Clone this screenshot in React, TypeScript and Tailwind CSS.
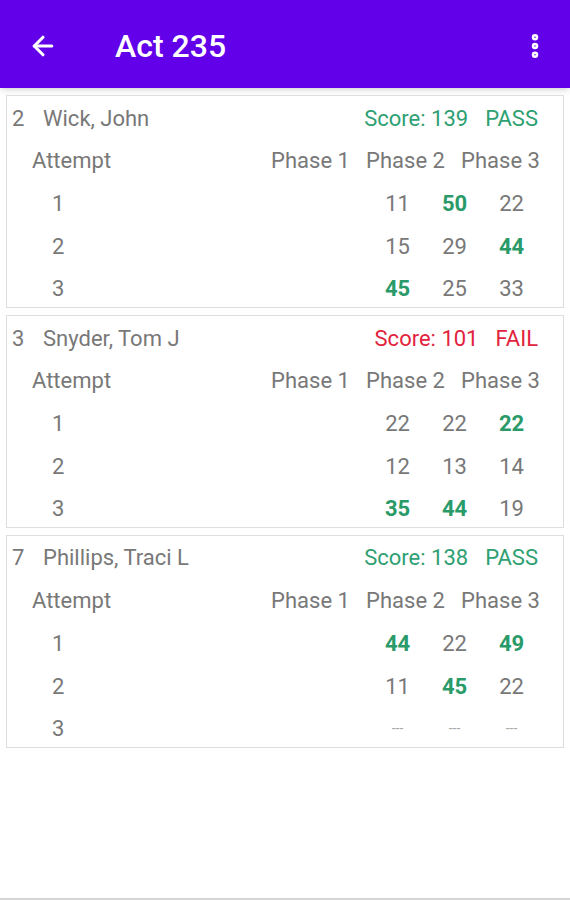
import { ArrowLeft, EllipsisVertical } from "lucide-react";

type Cell = { v: string; hi?: boolean };

type Entry = {
  no: number;
  name: string;
  score: number;
  pass: boolean;
  rows: Cell[][];
};

const entries: Entry[] = [
  {
    no: 2,
    name: "Wick, John",
    score: 139,
    pass: true,
    rows: [
      [{ v: "11" }, { v: "50", hi: true }, { v: "22" }],
      [{ v: "15" }, { v: "29" }, { v: "44", hi: true }],
      [{ v: "45", hi: true }, { v: "25" }, { v: "33" }],
    ],
  },
  {
    no: 3,
    name: "Snyder, Tom J",
    score: 101,
    pass: false,
    rows: [
      [{ v: "22" }, { v: "22" }, { v: "22", hi: true }],
      [{ v: "12" }, { v: "13" }, { v: "14" }],
      [{ v: "35", hi: true }, { v: "44", hi: true }, { v: "19" }],
    ],
  },
  {
    no: 7,
    name: "Phillips, Traci L",
    score: 138,
    pass: true,
    rows: [
      [{ v: "44", hi: true }, { v: "22" }, { v: "49", hi: true }],
      [{ v: "11" }, { v: "45", hi: true }, { v: "22" }],
      [{ v: "---" }, { v: "---" }, { v: "---" }],
    ],
  },
];

function ScoreCard({ e }: { e: Entry }) {
  const tone = e.pass ? "text-[#2ea072]" : "text-[#e2233d]";
  return (
    <div className="border border-[#dedede] bg-white">
      {/* name + score */}
      <div className="flex h-[42.2px] items-center pl-[5px] pr-[25px] pt-[2px]">
        <span className="w-[31px]">{e.no}</span>
        <span className="flex-1">{e.name}</span>
        <span className={tone}>Score: {e.score}</span>
        <span className={`ml-[17px] ${tone}`}>{e.pass ? "PASS" : "FAIL"}</span>
      </div>

      {/* column titles */}
      <div className="flex h-[42.2px] items-center pr-[15px] pt-[3px]">
        <span className="flex-1 pl-[25px]">Attempt</span>
        <span className="w-[95px] text-center">Phase 1</span>
        <span className="w-[95px] text-center">Phase 2</span>
        <span className="w-[95px] text-center">Phase 3</span>
      </div>

      {e.rows.map((r, i) => (
        <div key={i} className="flex h-[42.2px] items-center pr-[23px] pt-[5px]">
          <span className="flex-1 pl-[45px]">{i + 1}</span>
          {r.map((c, j) => (
            <span
              key={j}
              className={`w-[57px] text-center ${
                c.hi ? "font-bold text-[#2a9a69]" : c.v === "---" ? "text-[14px] text-[#aaaaaa]" : ""
              }`}
            >
              {c.v}
            </span>
          ))}
        </div>
      ))}
    </div>
  );
}

export default function App() {
  return (
    <div className="flex h-[900px] flex-col bg-white font-['Roboto',sans-serif] text-[22px] text-[#787878]">
      <header className="flex h-[88px] items-center bg-[#6200ea] pl-[28px] pr-[20px] pt-[3px] text-white shadow-md">
        <ArrowLeft size={30} strokeWidth={2.5} />
        <h1 className="ml-[57px] flex-1 text-[32px] font-medium">Act 235</h1>
        <EllipsisVertical size={30} strokeWidth={3.2} />
      </header>

      <main className="flex flex-1 flex-col gap-[7px] px-[6px] pt-[7px]">
        {entries.map((e) => (
          <ScoreCard key={e.no} e={e} />
        ))}
      </main>

      <div className="h-[2px] bg-[#d4d4d4]" />
    </div>
  );
}
